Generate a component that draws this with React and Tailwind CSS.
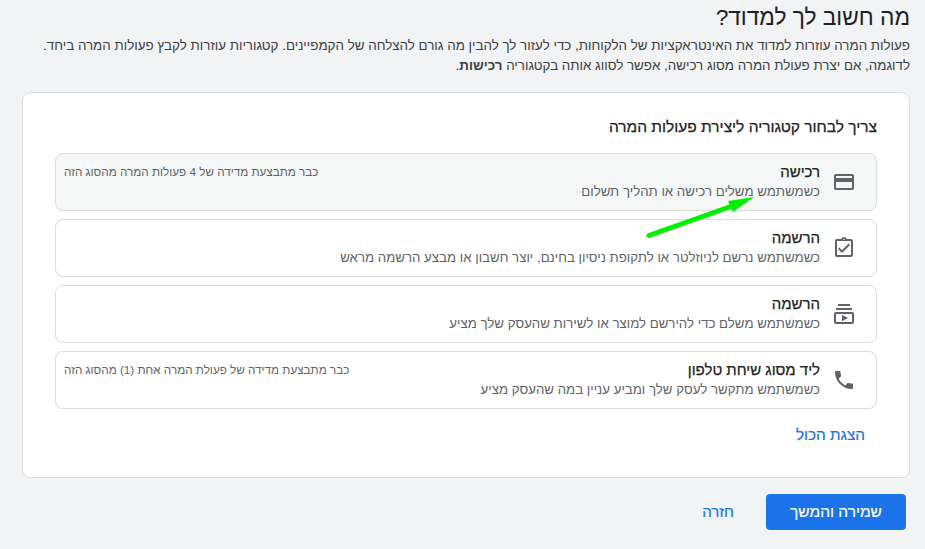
import React from "react";

const icons = {
  card: "M20 4H4c-1.11 0-1.99.89-1.99 2L2 18c0 1.11.89 2 2 2h16c1.11 0 2-.89 2-2V6c0-1.11-.89-2-2-2zm0 14H4v-6h16v6zm0-10H4V6h16v2z",
  assignment: "M18 9l-1.41-1.42L10 14.17l-2.59-2.58L6 13l4 4zm1-6h-4.18C14.4 1.84 13.3 1 12 1c-1.3 0-2.4.84-2.82 2H5c-.14 0-.27.01-.4.04-.39.08-.74.28-1.01.55-.18.18-.33.4-.43.64-.1.23-.16.49-.16.77v14c0 .27.06.54.16.78s.25.45.43.64c.27.27.62.47 1.01.55.13.02.26.03.4.03h14c1.1 0 2-.9 2-2V5c0-1.1-.9-2-2-2zm-7-.25c.41 0 .75.34.75.75s-.34.75-.75.75-.75-.34-.75-.75.34-.75.75-.75zM19 19H5V5h14v14z",
  subscriptions: "M4 6h16v2H4zm2-4h12v2H6zm14 8H4c-1.1 0-2 .9-2 2v8c0 1.1.9 2 2 2h16c1.1 0 2-.9 2-2v-8c0-1.1-.9-2-2-2zm0 10H4v-8h16v8zm-10-7.27v6.53L16 16z",
  phone: "M6.62 10.79c1.44 2.83 3.76 5.14 6.59 6.59l2.2-2.2c.27-.27.67-.36 1.02-.24 1.12.37 2.33.57 3.57.57.55 0 1 .45 1 1V20c0 .55-.45 1-1 1-9.39 0-17-7.61-17-17 0-.55.45-1 1-1h3.5c.55 0 1 .45 1 1 0 1.25.2 2.45.57 3.57.11.35.03.74-.25 1.02l-2.2 2.2z",
};

const rows = [
  {
    icon: "card",
    title: "רכישה",
    text: "כשמשתמש משלים רכישה או תהליך תשלום",
    note: "כבר מתבצעת מדידה של 4 פעולות המרה מהסוג הזה",
    active: true,
  },
  {
    icon: "assignment",
    title: "הרשמה",
    text: "כשמשתמש נרשם לניוזלטר או לתקופת ניסיון בחינם, יוצר חשבון או מבצע הרשמה מראש",
  },
  {
    icon: "subscriptions",
    title: "הרשמה",
    text: "כשמשתמש משלם כדי להירשם למוצר או לשירות שהעסק שלך מציע",
  },
  {
    icon: "phone",
    title: "ליד מסוג שיחת טלפון",
    text: "כשמשתמש מתקשר לעסק שלך ומביע עניין במה שהעסק מציע",
    note: "כבר מתבצעת מדידה של פעולת המרה אחת (1) מהסוג הזה",
  },
];

const Row = ({ icon, title, text, note, active }) => (
  <div
    className={`flex items-center h-[58px] pr-5 pl-2 rounded-lg border border-[#dadce0] ${active ? "bg-[#f5f7f7]" : "bg-white"}`}
  >
    <svg viewBox="0 0 24 24" className="w-6 h-6 shrink-0 fill-[#5f6368]">
      <path d={icons[icon]} />
    </svg>
    <div className="mr-3 flex-1">
      <div className="text-[15px] leading-5 [-webkit-text-stroke:0.25px] text-[#202124]">{title}</div>
      <div className="text-[13.25px] leading-5 text-[#5f6368]">{text}</div>
    </div>
    {note && <div className="self-start mt-[10px] text-[11.7px] leading-4 text-[#5f6368]">{note}</div>}
  </div>
);

export default function App() {
  return (
    <div
      dir="rtl"
      className="relative w-[925px] h-[549px] overflow-hidden bg-[#f1f3f4] px-[15px] font-['Liberation_Sans',Arial,sans-serif]"
    >
      <h1 className="pt-[2px] text-[22.7px] leading-[30px] font-normal text-[#202124]">מה חשוב לך למדוד?</h1>
      <p className="mt-[4px] text-[13.36px] leading-[20px] text-[#3c4043]">
        פעולות המרה עוזרות למדוד את האינטראקציות של הלקוחות, כדי לעזור לך להבין מה גורם להצלחה של הקמפיינים. קטגוריות עוזרות לקבץ פעולות המרה ביחד.
        <br />
        לדוגמה, אם יצרת פעולת המרה מסוג רכישה, אפשר לסווג אותה בקטגוריה <b>רכישות</b>.
      </p>

      <div className="mt-[16px] w-[888px] h-[386px] rounded-lg border border-[#dadce0] bg-white pt-[24px] px-[32px]">
        <h2 className="text-[15.5px] leading-5 [-webkit-text-stroke:0.25px] text-[#202124]">צריך לבחור קטגוריה ליצירת פעולות המרה</h2>
        <div className="mt-4 flex flex-col gap-2">
          {rows.map((row, i) => (
            <Row key={i} {...row} />
          ))}
        </div>
        <button className="mt-4 mr-[12px] text-[15.3px] leading-5 [-webkit-text-stroke:0.2px] text-[#1a73e8]">הצגת הכול</button>
      </div>

      <div className="mt-4 flex items-center pr-[4px]">
        <button className="w-[140px] h-9 rounded bg-[#1a73e8] text-[15.5px] [-webkit-text-stroke:0.2px] text-white">שמירה והמשך</button>
        <button className="mr-[32px] text-[15px] [-webkit-text-stroke:0.2px] text-[#1a73e8]">חזרה</button>
      </div>

      {/* green annotation arrow */}
      <svg className="absolute left-0 top-0 pointer-events-none" width="925" height="549">
        <line x1="649" y1="235.5" x2="735" y2="205" stroke="#00f000" strokeWidth="5" strokeLinecap="round" />
        <polygon points="754,197 728,201 733,212" fill="#00f000" />
      </svg>
    </div>
  );
}
